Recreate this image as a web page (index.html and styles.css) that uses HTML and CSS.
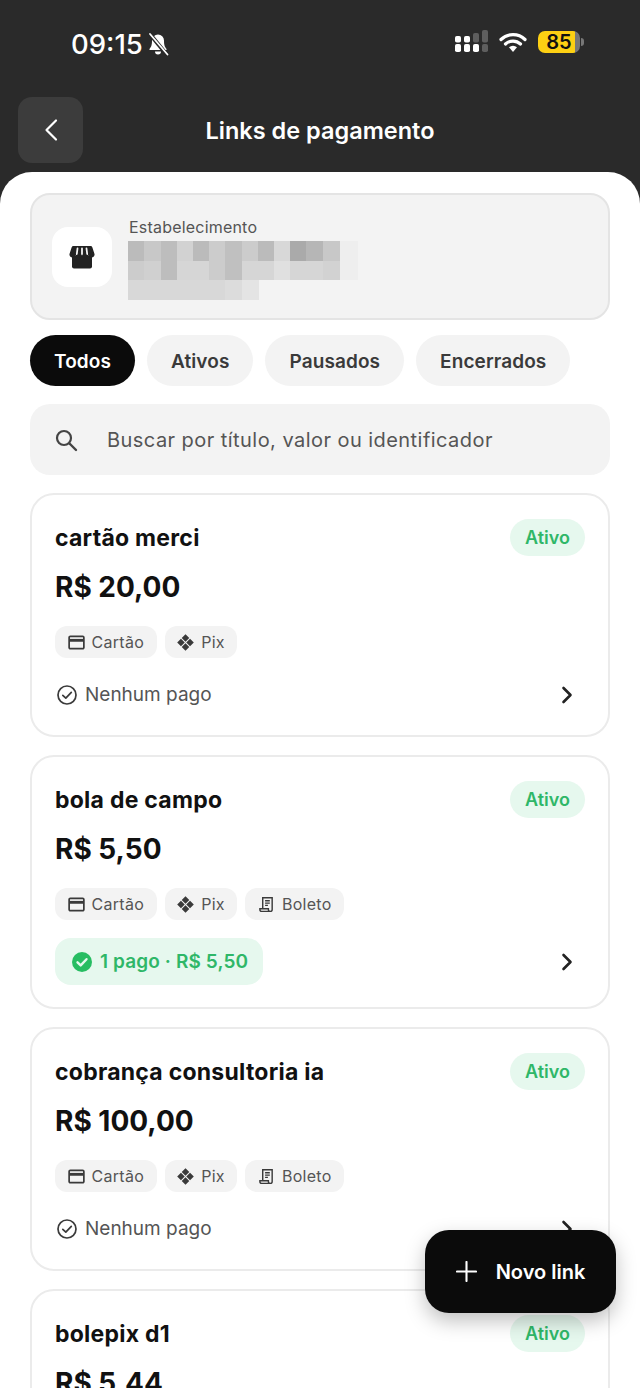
FILE: index.html
```html
<!DOCTYPE html>
<html lang="pt-BR">
<head>
  <meta charset="UTF-8">
  <meta name="viewport" content="width=device-width, initial-scale=1.0">
  <title>Links de pagamento</title>
  <link rel="stylesheet" href="styles.css">
</head>
<body>
  <svg class="icon-defs" width="0" height="0">
    <symbol id="i-card" viewBox="0 0 18 16">
      <path d="M2.500 1.500h13a1.300 1.300 0 0 1 1.300 1.300v10.400a1.300 1.300 0 0 1-1.300 1.300h-13a1.300 1.300 0 0 1-1.300-1.300V2.800a1.300 1.300 0 0 1 1.300-1.300z" fill="none" stroke="currentColor" stroke-width="1.800"/>
      <rect x="1.500" y="4.200" width="15" height="3" fill="currentColor"/>
    </symbol>
    <symbol id="i-pix" viewBox="0 0 18 18">
      <path d="M9 .2 13 4.200 9 8.200 5 4.200zM9 9.800 13 13.800 9 17.800 5 13.800zM4.200 5 8.200 9 4.200 13 .2 9zM13.800 5 17.800 9 13.800 13 9.800 9z" fill="currentColor"/>
    </symbol>
    <symbol id="i-boleto" viewBox="0 0 16 18">
      <path d="M4 13.500V1.800h10v12.500a2 2 0 0 1-2 2H3a2 2 0 0 1-2-2v-.8h9v.8a2 2 0 0 0 2 2" fill="none" stroke="currentColor" stroke-width="1.500"/>
      <path d="M6.500 5h5M6.500 7.500h5M6.500 10h3" fill="none" stroke="currentColor" stroke-width="1.400"/>
    </symbol>
    <symbol id="i-check" viewBox="0 0 20 20">
      <circle cx="10" cy="10" r="9" fill="none" stroke="currentColor" stroke-width="1.700"/>
      <path d="M5.800 10.300 8.800 13.200 14.300 7.300" fill="none" stroke="currentColor" stroke-width="1.700" stroke-linecap="round" stroke-linejoin="round"/>
    </symbol>
    <symbol id="i-chevron" viewBox="0 0 12 18">
      <path d="M2.500 2 9.500 9 2.500 16" fill="none" stroke="currentColor" stroke-width="2.600" stroke-linecap="round" stroke-linejoin="round"/>
    </symbol>
  </svg>

  <header class="top">
    <div class="status-bar">
      <div class="status-left">
        <span class="clock">09:15</span>
        <svg class="bell" viewBox="0 0 22 24" width="22" height="24">
          <path d="M11 2.500a6 6 0 0 1 6 6c0 5 1 6.500 2.500 8.500v1h-17v-1c1.500-2 2.500-3.500 2.500-8.500a6 6 0 0 1 6-6zM8 19.500h6a3 3 0 0 1-6 0z" fill="#fff"/>
          <path d="M2.500 1.500 20 23" stroke="#2a2a2a" stroke-width="4"/>
          <path d="M3 2 20.500 22.500" stroke="#fff" stroke-width="1.800" stroke-linecap="round"/>
        </svg>
      </div>
      <div class="status-right">
        <svg class="signal" viewBox="0 0 33 23" width="33" height="23">
          <g fill="#fff">
            <rect x="0" y="14" width="6" height="8" rx="1.800"/>
            <rect x="9" y="14" width="6" height="8" rx="1.800"/>
            <rect x="18" y="14" width="6" height="8" rx="1.800"/>
            <rect x="0" y="6" width="6" height="6.500" rx="1.800"/>
            <rect x="9" y="6" width="6" height="6.500" rx="1.800"/>
          </g>
          <g fill="#5e5e5e">
            <rect x="18" y="3" width="6" height="9.500" rx="1.800"/>
            <rect x="27" y="0" width="6" height="12.500" rx="1.800"/>
            <rect x="27" y="14" width="6" height="8" rx="1.800"/>
          </g>
        </svg>
        <svg class="wifi" viewBox="0 0 28 22" width="28" height="22">
          <path d="M2 8.500a17 17 0 0 1 24 0M6.500 13a11 11 0 0 1 15 0" fill="none" stroke="#fff" stroke-width="3.200" stroke-linecap="round"/>
          <path d="M10 16.200a6 6 0 0 1 8 0L14 21z" fill="#fff"/>
        </svg>
        <div class="battery">
          <span class="battery-level">85</span>
        </div>
      </div>
    </div>
    <div class="nav">
      <button class="back" type="button">
        <svg viewBox="0 0 16 24" width="16" height="24">
          <path d="M13 2.500 3.500 12 13 21.500" fill="none" stroke="#fff" stroke-width="2.200" stroke-linecap="round" stroke-linejoin="round"/>
        </svg>
      </button>
      <h1>Links de pagamento</h1>
    </div>
  </header>

  <main class="sheet">
    <section class="merchant">
      <div class="merchant-icon">
        <svg viewBox="0 0 26 24" width="26" height="24">
          <path d="M3 11h20v10.500a2 2 0 0 1-2 2H5a2 2 0 0 1-2-2z" fill="#222"/>
          <path d="M4.500 1h17a2 2 0 0 1 1.900 1.400L25.500 9a3 3 0 0 1-3 3.500 3 3 0 0 1-2.800-2 3 3 0 0 1-3.300 2 3 3 0 0 1-3.400-2 3 3 0 0 1-3.400 2 3 3 0 0 1-3.300-2 3 3 0 0 1-2.800 2 3 3 0 0 1-3-3.500l2.100-6.600A2 2 0 0 1 4.500 1z" fill="#222"/>
          <path d="M8.500 3.500 7.800 9M13 3.500V9M17.500 3.500 18.200 9" stroke="#f4f4f4" stroke-width="1.800" stroke-linecap="round"/>
        </svg>
      </div>
      <div class="merchant-text">
        <span class="merchant-label">Estabelecimento</span>
        <svg class="mosaic" viewBox="0 0 230 59" width="230" height="59">
          <g>
            <rect x="0" y="0" width="17" height="20" fill="#bbb"/>
            <rect x="16" y="0" width="17" height="20" fill="#c8c8c8"/>
            <rect x="33" y="0" width="17" height="20" fill="#bdbdbd"/>
            <rect x="49" y="0" width="17" height="20" fill="#d2d2d2"/>
            <rect x="65" y="0" width="17" height="20" fill="#bbb"/>
            <rect x="81" y="0" width="17" height="20" fill="#ccc"/>
            <rect x="97" y="0" width="17" height="20" fill="#c0c0c0"/>
            <rect x="114" y="0" width="17" height="20" fill="#ccc"/>
            <rect x="130" y="0" width="17" height="20" fill="#bbb"/>
            <rect x="146" y="0" width="17" height="20" fill="#d8d8d8"/>
            <rect x="162" y="0" width="17" height="20" fill="#aaa"/>
            <rect x="178" y="0" width="17" height="20" fill="#b6b6b6"/>
            <rect x="195" y="0" width="17" height="20" fill="#c8c8c8"/>
            <rect x="212" y="0" width="18" height="20" fill="#eee"/>
          </g>
          <g>
            <rect x="0" y="20" width="17" height="19" fill="#ccc"/>
            <rect x="16" y="20" width="17" height="19" fill="#d0d0d0"/>
            <rect x="33" y="20" width="17" height="19" fill="#bdbdbd"/>
            <rect x="49" y="20" width="33" height="19" fill="#d6d6d6"/>
            <rect x="81" y="20" width="17" height="19" fill="#ccc"/>
            <rect x="97" y="20" width="17" height="19" fill="#c0c0c0"/>
            <rect x="114" y="20" width="33" height="19" fill="#d6d6d6"/>
            <rect x="146" y="20" width="17" height="19" fill="#e0e0e0"/>
            <rect x="162" y="20" width="33" height="19" fill="#d6d6d6"/>
            <rect x="195" y="20" width="17" height="19" fill="#d2d2d2"/>
            <rect x="212" y="20" width="18" height="19" fill="#eee"/>
          </g>
          <g>
            <rect x="0" y="39" width="98" height="20" fill="#d8d8d8"/>
            <rect x="97" y="39" width="17" height="20" fill="#dcdcdc"/>
            <rect x="114" y="39" width="17" height="20" fill="#e4e4e4"/>
          </g>
        </svg>
      </div>
    </section>

    <nav class="filters">
      <span class="filter filter-on">Todos</span>
      <span class="filter">Ativos</span>
      <span class="filter">Pausados</span>
      <span class="filter">Encerrados</span>
    </nav>

    <div class="search">
      <svg viewBox="0 0 24 24" width="24" height="24">
        <circle cx="10" cy="10" r="7" fill="none" stroke="#444" stroke-width="2.200"/>
        <path d="M15.500 15.500 22 22" stroke="#444" stroke-width="2.400" stroke-linecap="round"/>
      </svg>
      <span>Buscar por título, valor ou identificador</span>
    </div>

    <article class="card">
      <div class="card-head">
        <h2>cartão merci</h2>
        <span class="badge">Ativo</span>
      </div>
      <p class="price">R$ 20,00</p>
      <div class="tags">
        <span class="tag"><svg class="tag-icon"><use href="#i-card"/></svg>Cartão</span>
        <span class="tag"><svg class="tag-icon"><use href="#i-pix"/></svg>Pix</span>
      </div>
      <div class="card-foot">
        <span class="none"><svg class="none-icon"><use href="#i-check"/></svg>Nenhum pago</span>
        <svg class="chevron"><use href="#i-chevron"/></svg>
      </div>
    </article>

    <article class="card">
      <div class="card-head">
        <h2>bola de campo</h2>
        <span class="badge">Ativo</span>
      </div>
      <p class="price">R$ 5,50</p>
      <div class="tags">
        <span class="tag"><svg class="tag-icon"><use href="#i-card"/></svg>Cartão</span>
        <span class="tag"><svg class="tag-icon"><use href="#i-pix"/></svg>Pix</span>
        <span class="tag"><svg class="tag-icon"><use href="#i-boleto"/></svg>Boleto</span>
      </div>
      <div class="card-foot">
        <span class="paid">
          <svg viewBox="0 0 20 20" width="20" height="20">
            <circle cx="10" cy="10" r="10" fill="#27bd62"/>
            <path d="M5.500 10.300 8.700 13.400 14.500 7.200" fill="none" stroke="#e6f8ee" stroke-width="2.400" stroke-linecap="round" stroke-linejoin="round"/>
          </svg>
          1 pago · R$ 5,50
        </span>
        <svg class="chevron"><use href="#i-chevron"/></svg>
      </div>
    </article>

    <article class="card">
      <div class="card-head">
        <h2>cobrança consultoria ia</h2>
        <span class="badge">Ativo</span>
      </div>
      <p class="price">R$ 100,00</p>
      <div class="tags">
        <span class="tag"><svg class="tag-icon"><use href="#i-card"/></svg>Cartão</span>
        <span class="tag"><svg class="tag-icon"><use href="#i-pix"/></svg>Pix</span>
        <span class="tag"><svg class="tag-icon"><use href="#i-boleto"/></svg>Boleto</span>
      </div>
      <div class="card-foot">
        <span class="none"><svg class="none-icon"><use href="#i-check"/></svg>Nenhum pago</span>
        <svg class="chevron"><use href="#i-chevron"/></svg>
      </div>
    </article>

    <article class="card">
      <div class="card-head">
        <h2>bolepix d1</h2>
        <span class="badge">Ativo</span>
      </div>
      <p class="price">R$ 5,44</p>
    </article>
  </main>

  <button class="fab" type="button">
    <svg viewBox="0 0 22 22" width="21" height="21">
      <path d="M11 1v20M1 11h20" stroke="#fff" stroke-width="2.200" stroke-linecap="round"/>
    </svg>
    Novo link
  </button>
</body>
</html>
```

FILE: styles.css
```css
* {
  box-sizing: border-box;
}
body {
  margin: 0;
  height: 1388px;
  overflow: hidden;
  position: relative;
  background: #2a2a2a;
  color: #111;
  font-family: "Inter", "Liberation Sans", sans-serif;
}
.icon-defs {
  position: absolute;
}

/* top */
.top {
  height: 172px;
  color: #fff;
}
.status-bar {
  height: 97px;
  padding: 30px 56px 0 71px;
  display: flex;
  justify-content: space-between;
  align-items: flex-start;
}
.status-left {
  display: flex;
  align-items: center;
  gap: 4px;
}
.clock {
  font-size: 27.500px;
  font-weight: 500;
  line-height: 28px;
}
.status-right {
  display: flex;
  align-items: center;
  gap: 11px;
}
.battery {
  width: 46px;
  height: 22px;
  display: flex;
  position: relative;
}
.battery-level {
  width: 42px;
  height: 22px;
  border-radius: 7px;
  background: linear-gradient(90deg, #fdd013 88%, #777 88%);
  color: #111;
  font-size: 20px;
  font-weight: 600;
  line-height: 22px;
  text-align: center;
}
.battery::after {
  content: "";
  position: absolute;
  right: 0;
  top: 7px;
  width: 3px;
  height: 8px;
  border-radius: 0 3px 3px 0;
  background: #777;
}
.nav {
  height: 66px;
  position: relative;
  display: flex;
  align-items: center;
  justify-content: center;
}
.nav h1 {
  margin: 0;
  font-size: 23.500px;
  font-weight: 600;
}
.back {
  position: absolute;
  left: 18px;
  top: 0;
  width: 65px;
  height: 66px;
  padding: 0;
  border: none;
  border-radius: 14px;
  background: #3c3c3c;
  display: flex;
  align-items: center;
  justify-content: center;
}

/* sheet */
.sheet {
  height: 1216px;
  overflow: hidden;
  padding: 21px 30px 0;
  background: #fff;
  border-radius: 32px 32px 0 0;
}
.merchant {
  height: 127px;
  padding: 0 20px;
  margin-bottom: 15px;
  display: flex;
  align-items: center;
  gap: 17px;
  background: #f3f3f3;
  border: 2px solid #e4e4e4;
  border-radius: 20px;
}
.merchant-icon {
  width: 60px;
  height: 60px;
  border-radius: 16px;
  background: #fff;
  display: flex;
  align-items: center;
  justify-content: center;
}
.merchant-text {
  display: flex;
  flex-direction: column;
  margin-top: 3px;
}
.merchant-label {
  margin-bottom: 3px;
  font-size: 16px;
  letter-spacing: 0.2px;
  line-height: 22px;
  color: #555;
}
.mosaic {
  display: block;
  margin-left: -1px;
}
.filters {
  display: flex;
  gap: 12px;
  margin-bottom: 18px;
}
.filter {
  height: 51px;
  padding: 1px 24px 0;
  display: flex;
  align-items: center;
  border-radius: 26px;
  background: #f3f3f3;
  color: #3a3a3a;
  font-size: 19px;
  font-weight: 600;
  letter-spacing: 0.1px;
}
.filter-on {
  background: #0b0b0b;
  color: #fff;
}
.search {
  height: 71px;
  padding: 1px 24px 0;
  margin-bottom: 18px;
  display: flex;
  align-items: center;
  gap: 29px;
  border-radius: 20px;
  background: #f3f3f3;
  color: #555;
  font-size: 20px;
  letter-spacing: 0.45px;
}

/* cards */
.card {
  padding: 24px 23px 22px;
  margin-bottom: 18px;
  background: #fff;
  border: 2px solid #ebebeb;
  border-radius: 24px;
}
.card-head {
  height: 37px;
  display: flex;
  justify-content: space-between;
  align-items: center;
}
.card-head h2 {
  margin: 0;
  padding-top: 1px;
  font-size: 23px;
  font-weight: 700;
  letter-spacing: 0.25px;
}
.badge {
  width: 75px;
  height: 37px;
  display: flex;
  align-items: center;
  justify-content: center;
  border-radius: 19px;
  background: #e6f8ee;
  color: #2fb768;
  font-size: 18px;
  font-weight: 600;
}
.price {
  margin: 12px 0 20px;
  font-size: 28px;
  font-weight: 700;
  line-height: 38px;
}
.tags {
  display: flex;
  gap: 8px;
  margin-bottom: 18px;
}
.tag {
  height: 32px;
  padding: 0 12.500px;
  display: flex;
  align-items: center;
  gap: 7px;
  border-radius: 12px;
  background: #f3f3f3;
  color: #555;
  font-size: 16px;
  letter-spacing: 0.3px;
}
.tag-icon {
  width: 17px;
  height: 17px;
  color: #3a3a3a;
}
.card-foot {
  min-height: 37px;
  display: flex;
  justify-content: space-between;
  align-items: center;
}
.none {
  display: flex;
  align-items: center;
  gap: 8px;
  padding-left: 2px;
  color: #555;
  font-size: 19px;
}
.none-icon {
  width: 20px;
  height: 20px;
  color: #3a3a3a;
}
.paid {
  height: 47px;
  padding: 0 15px 0 17px;
  display: flex;
  align-items: center;
  gap: 8px;
  border-radius: 16px;
  background: #e6f8ee;
  color: #2fb768;
  font-size: 19px;
  font-weight: 600;
  letter-spacing: 0.12px;
}
.chevron {
  width: 12px;
  height: 18px;
  margin-right: 12px;
  color: #222;
}

/* floating button */
.fab {
  position: absolute;
  left: 425px;
  top: 1230px;
  width: 191px;
  height: 83px;
  padding: 0;
  border: none;
  border-radius: 24px;
  background: #0b0b0b;
  color: #fff;
  display: flex;
  align-items: center;
  justify-content: center;
  gap: 19px;
  font-family: inherit;
  font-size: 20px;
  font-weight: 600;
  box-shadow: 0 8px 20px rgba(0, 0, 0, 0.25);
}
```
